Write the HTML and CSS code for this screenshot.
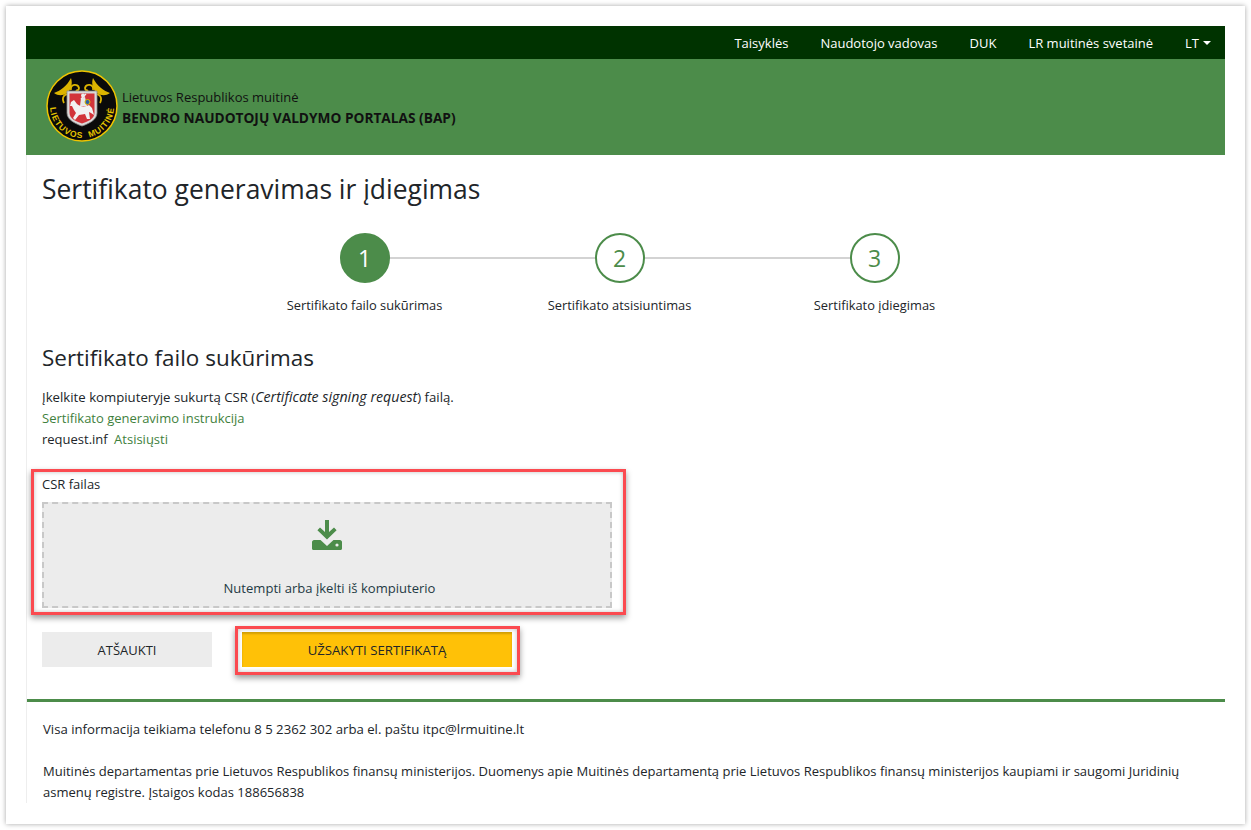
FILE: index.html
```html
<!DOCTYPE html>
<html lang="lt">
<head>
<meta charset="utf-8">
<title>Sertifikato generavimas ir įdiegimas</title>
<link rel="stylesheet" href="styles.css">
</head>
<body>
<div class="window">
  <div class="page">
    <nav class="topbar">
      <a>Taisyklės</a>
      <a>Naudotojo vadovas</a>
      <a>DUK</a>
      <a>LR muitinės svetainė</a>
      <a class="lang">LT<span class="caret"></span></a>
    </nav>
    <header class="brand">
      <svg class="logo" width="72" height="72" viewBox="0 0 72 72">
        <defs>
          <path id="arc" d="M4.600 30 A32 32 0 1 0 67.400 30"/>
        </defs>
        <circle cx="36" cy="36" r="35" fill="#0a0a0a" stroke="#f0c400" stroke-width="1.500"/>
        <g fill="#dcb400">
          <path d="M8 23 C14 21 21 16 25 8 C27 14 25 20 21 23 C17 26 12 26 8 23Z"/>
          <path d="M64 23 C58 21 51 16 47 8 C45 14 47 20 51 23 C55 26 60 26 64 23Z"/>
        </g>
        <g fill="none" stroke="#dcb400" stroke-width="1.800">
          <path d="M18 33 C15 27 19 24 22 24"/>
          <path d="M54 33 C57 27 53 24 50 24"/>
          <path d="M25 20 C24 14 32 13 33 18 C33 20 31 21 30 20"/>
          <path d="M47 20 C48 14 40 13 39 18 C39 20 41 21 42 20"/>
        </g>
        <path d="M21 21 H51 V43 C51 50 42 54 36 56 C30 54 21 50 21 43Z" fill="#d9d9d9" stroke="#8a8a8a" stroke-width=".8"/>
        <path d="M23.500 23.500 H48.500 V43 C48.500 49 41 52 36 53.500 C31 52 23.500 49 23.500 43Z" fill="#d2343a"/>
        <path d="M25 32 L28 30 L31 34 C34 37 40 37 43 35 L46 38 L48 45 L45 43 L43 42 L44 49 L41 49 L39 44 L33 45 L29 50 L27 48 L30 43 L28 40 L26 36 L24 36Z" fill="#f2f2f2"/>
        <path d="M34 36 L35 28 L39 27 L41 36Z" fill="#e8e8e8"/>
        <circle cx="37" cy="25.500" r="2" fill="#eee"/>
        <path d="M35 29 L40 24" stroke="#eee" stroke-width="1.200"/>
        <circle cx="41.500" cy="32" r="2.500" fill="#2d5fa8" stroke="#e0bd00"/>
        <text class="logo-text"><textPath href="#arc" startOffset="50%" text-anchor="middle">LIETUVOS&#160;&#160;MUITINĖ</textPath></text>
      </svg>
      <div class="brand-text">
        <div class="brand-org">Lietuvos Respublikos muitinė</div>
        <div class="brand-name">BENDRO NAUDOTOJŲ VALDYMO PORTALAS (BAP)</div>
      </div>
    </header>
    <div class="page-body">
      <main class="content">
        <h1 class="title">Sertifikato generavimas ir įdiegimas</h1>
        <ol class="stepper">
          <li class="step active"><span class="bubble">1</span><span class="step-label">Sertifikato failo sukūrimas</span></li>
          <li class="step"><span class="bubble">2</span><span class="step-label">Sertifikato atsisiuntimas</span></li>
          <li class="step"><span class="bubble">3</span><span class="step-label">Sertifikato įdiegimas</span></li>
        </ol>
        <h2 class="subtitle">Sertifikato failo sukūrimas</h2>
        <div class="intro">
          <div class="intro-lead">Įkelkite kompiuteryje sukurtą CSR (<em>Certificate signing request</em>) failą.</div>
          <div><a class="link">Sertifikato generavimo instrukcija</a></div>
          <div>request.inf <a class="link dl">Atsisiųsti</a></div>
        </div>
        <section class="field mark">
          <label class="field-label">CSR failas</label>
          <div class="drop">
            <svg class="drop-icon" width="30" height="30" viewBox="0 0 30 30">
              <path d="M13 0 H17 V12 L22 7.500 L24.600 10.200 L15 19.500 L5.400 10.200 L8 7.500 L13 12Z" fill="#4c8c4a"/>
              <path d="M2 20 H8.500 L15 26 L21.500 20 H28 C29 20 30 21 30 22 V28.500 C30 29.400 29.400 30 28.500 30 H1.500 C.6 30 0 29.400 0 28.500 V22 C0 21 1 20 2 20Z" fill="#4c8c4a"/>
              <circle cx="25" cy="25" r="1.600" fill="#ececec"/>
            </svg>
            <span class="drop-text">Nutempti arba įkelti iš kompiuterio</span>
          </div>
        </section>
        <div class="actions">
          <button class="btn btn-cancel">ATŠAUKTI</button>
          <div class="mark mark-btn"><button class="btn btn-primary">UŽSAKYTI SERTIFIKATĄ</button></div>
        </div>
      </main>
      <footer class="footer">
        <p class="footer-contact">Visa informacija teikiama telefonu 8 5 2362 302 arba el. paštu itpc@lrmuitine.lt</p>
        <p>Muitinės departamentas prie Lietuvos Respublikos finansų ministerijos. Duomenys apie Muitinės departamentą prie Lietuvos Respublikos finansų ministerijos kaupiami ir saugomi Juridinių asmenų registre. Įstaigos kodas 188656838</p>
      </footer>
    </div>
  </div>
</div>
</body>
</html>
```
FILE: styles.css
```css
* { box-sizing: border-box; }
html, body { height: 100%; }
body {
  margin: 0;
  background: #fff;
  color: #212529;
  font-family: "Open Sans", "Noto Sans", sans-serif;
  font-size: 13px;
  overflow: hidden;
}
.window {
  margin: 6px 0 0 6px;
  width: 1239px;
  height: 818px;
  padding: 20px 20px 21px;
  background: #fff;
  box-shadow: 0 0 5px rgba(0,0,0,.35);
}
.page {
  height: 777px;
  overflow: hidden;
  display: flex;
  flex-direction: column;
}
.topbar {
  flex: none;
  height: 33px;
  background: #003300;
  display: flex;
  justify-content: flex-end;
  align-items: center;
  gap: 32px;
  padding-right: 14px;
}
.topbar a { color: #fff; }
.caret {
  display: inline-block;
  margin-left: 4px;
  vertical-align: 3px;
  border-top: 4px solid #fff;
  border-left: 4px solid transparent;
  border-right: 4px solid transparent;
}
.brand {
  flex: none;
  height: 96px;
  background: #4c8c4a;
  padding: 11px 0 0 20px;
  display: flex;
  align-items: flex-start;
  gap: 4px;
}
.logo { flex: none; }
.logo-text { font: 700 8.500px "Liberation Sans", sans-serif; fill: #e6c400; letter-spacing: .9px; }
.brand-text { margin-top: 17px; color: #111; }
.brand-org { line-height: 20px; }
.brand-name { font-weight: 700; font-size: 13.700px; line-height: 20px; margin-top: 1px; }
.page-body {
  flex: 1;
  border-left: 1px solid #eee;
}
.content { padding: 0 15px; }
.title {
  margin: 0;
  padding-top: 16px;
  font-size: 26.450px;
  font-weight: 400;
  line-height: 36px;
}
.stepper {
  list-style: none;
  margin: 26px 0 0 195px;
  padding: 0;
  display: grid;
  grid-template-columns: repeat(3, 255px);
}
.step {
  position: relative;
  display: flex;
  flex-direction: column;
  align-items: center;
}
.step:not(:last-child)::after {
  content: "";
  position: absolute;
  top: 24px;
  left: 50%;
  width: 100%;
  height: 2px;
  background: #d3d3d3;
}
.bubble {
  position: relative;
  z-index: 1;
  width: 50px;
  height: 50px;
  border-radius: 50%;
  border: 2px solid #4c8c4a;
  background: #fff;
  color: #4c8c4a;
  font-size: 23px;
  display: flex;
  align-items: center;
  justify-content: center;
}
.active .bubble { background: #4c8c4a; color: #fff; }
.step-label { margin-top: 12px; line-height: 20px; font-size: 12.850px; }
.subtitle {
  margin: 29px 0 0;
  font-size: 22.450px;
  font-weight: 400;
  line-height: 28px;
}
.intro { margin-top: 14px; line-height: 21px; }
.intro-lead { font-size: 13.200px; }
.intro em { font-size: 14.200px; }
.link { color: #3f7f3d; }
.dl { margin-left: 3px; }
.mark {
  border: 3px solid #fb4a50;
  box-shadow: 0 3px 6px rgba(0,0,0,.4), inset 0 0 4px rgba(0,0,0,.25);
}
.field {
  width: 595px;
  height: 146px;
  margin: 19px 0 0 -11px;
  padding: 3px 11px 4px 8px;
}
.field-label { display: block; line-height: 18px; }
.drop {
  margin-top: 9px;
  height: 106px;
  background: #ececec;
  border: 2px dashed #c8c8c8;
  display: flex;
  flex-direction: column;
  align-items: center;
}
.drop-icon { margin-top: 16px; }
.drop-text { margin-top: 28px; padding-left: 5px; font-size: 13.050px; color: #1f3a44; line-height: 20px; }
.actions {
  display: flex;
  align-items: flex-start;
  gap: 23px;
  margin-top: 11px;
}
.btn {
  width: 170px;
  height: 35px;
  border: 0;
  font: inherit;
  color: #212529;
}
.btn-cancel { background: #ececec; margin-top: 6px; }
.mark-btn { padding: 3px 5px 5px 4px; }
.btn-primary {
  display: block;
  width: 270px;
  font-size: 13.200px;
  background: #ffc107;
  box-shadow: inset 0 2px 2px rgba(0,0,0,.18);
}
.footer {
  margin-top: 24px;
  border-top: 3px solid #4c8c4a;
  padding: 17px 16px 0;
}
.footer p { margin: 0 0 21px; line-height: 21px; font-size: 13.030px; }
.footer .footer-contact { font-size: 13.180px; }
```
